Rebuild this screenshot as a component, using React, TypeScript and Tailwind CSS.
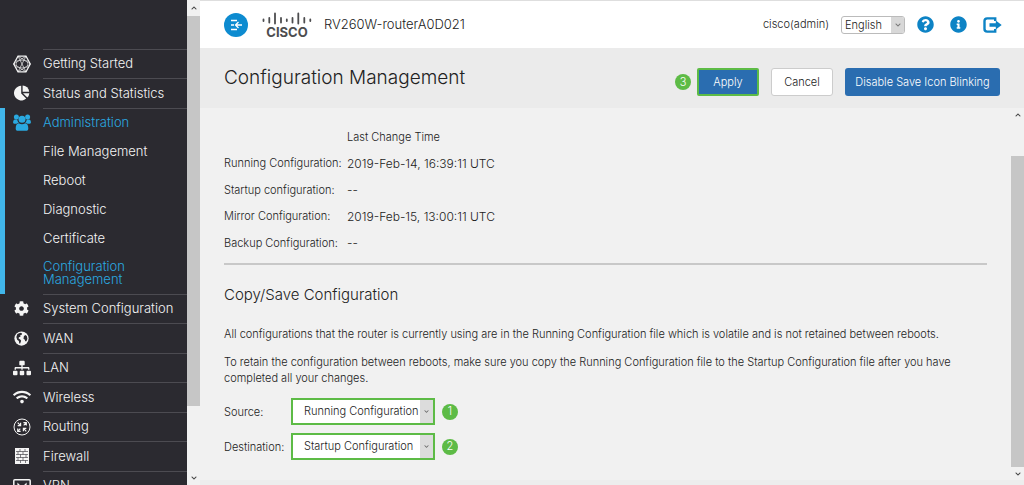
import { useState } from 'react';
import type { ReactNode } from 'react';
import {
  FaChevronDown,
  FaChevronUp,
  FaCog,
  FaInfoCircle,
  FaQuestionCircle,
  FaSitemap,
  FaWifi,
} from 'react-icons/fa';

function StartIcon() {
  return (
    <svg viewBox="0 0 18 18" className="size-[18px]" fill="none" stroke="currentColor">
      <path d="M5 1.2h8L17.3 9 13 16.8H5L.7 9z" strokeWidth="1.2" />
      <path d="M5 1.2 13 16.8M13 1.2 5 16.8M.7 9 13 1.2M17.3 9 5 16.8M.7 9 13 16.8M17.3 9 5 1.2" strokeWidth=".7" />
      <path d="M3.500 5.500h11v7h-11z" strokeWidth=".4" />
    </svg>
  );
}

function PieIcon() {
  return (
    <svg viewBox="0 0 16 16" className="size-4" fill="currentColor">
      <path d="M7.2.8a7.3 7.3 0 1 0 5 12.7L7.2 8.4z" />
      <path d="M8.6.5v6.2h6.6A6.8 6.8 0 0 0 8.6.5z" />
      <path d="M9 8.2h6.3a7 7 0 0 1-2 4.4z" />
    </svg>
  );
}

function UsersIcon() {
  return (
    <svg viewBox="0 0 18 17" className="h-[17px] w-[18px]" fill="currentColor">
      <circle cx="3.4" cy="2.9" r="2.5" />
      <circle cx="14.6" cy="2.9" r="2.5" />
      <circle cx="9" cy="5.2" r="3.5" />
      <path d="M1.6 5.5h2.6c.2 1.6.9 2.6 2 3.2-1.2 0-2 .4-2.6 1.1H1.2C.5 9.8.1 9.3.1 8.6.1 7 .6 5.9 1.600 5.500z" />
      <path d="M16.400 5.500h-2.600c-.2 1.600-.9 2.600-2 3.200 1.200 0 2 .4 2.600 1.100h2.400c.7 0 1.100-.5 1.100-1.200 0-1.600-.5-2.700-1.500-3.100z" />
      <path d="M5.800 9.200c2 1.300 4.400 1.300 6.400 0 2.200.2 3.100 2.400 3.100 5.200 0 1.500-.8 2.300-2.200 2.300H4.900c-1.400 0-2.200-.8-2.200-2.300 0-2.800.9-5 3.100-5.200z" />
    </svg>
  );
}

function GlobeIcon() {
  return (
    <svg viewBox="0 0 16 16" className="size-[15px]">
      <circle cx="8" cy="8" r="7.600" fill="currentColor" />
      <path
        d="M3.600 3.200 6.800 1.800 8.700 2.600 8 4.200 6.600 4.600 6.900 6.200 5.200 6.600 4.900 8 6.700 9 7.600 10.400 6.600 13.400 5.600 13.200 5.200 10.600 3.400 9.200 2.500 6.400z"
        fill="#2b2a30"
      />
      <path d="M10.600 5.200 12.400 4.200 13.800 5.600 14.300 8.600 13.200 10.800 11.900 11 11.600 9.200 10.100 8.200z" fill="#2b2a30" />
    </svg>
  );
}

function RoutingIcon() {
  return (
    <svg viewBox="0 0 18 18" className="size-[18px]" fill="none" stroke="currentColor">
      <circle cx="9" cy="9" r="8" strokeWidth="1" />
      <path d="m4.700 4.700 2.600 2.600M7.600 4.700v2.900H4.700M13.300 4.700l-2.600 2.600M10.400 4.700h2.900v2.900M4.700 13.300l2.600-2.600M4.700 10.400v2.900h2.900M13.300 13.300l-2.600-2.600M10.400 13.300v-2.900h2.900" strokeWidth="1.200" />
    </svg>
  );
}

function WallIcon() {
  return (
    <svg viewBox="0 0 14 16" className="h-4 w-3.5">
      <path fill="currentColor" d="M0 0h14v16H0z" />
      <path
        d="M1 3.500h12M1 6.500h12M1 9.500h12M1 12.500h12M5 1v2.500M10 1v2.500M3 3.500v3M8 3.500v3M5.500 6.500v3M11 6.500v3M3 9.500v3M8 9.500v3M5.500 12.500V15M10.500 12.500V15"
        stroke="#2b2a30"
        strokeWidth=".6"
      />
    </svg>
  );
}

function VpnIcon() {
  return (
    <svg viewBox="0 0 18 18" className="size-[18px]" fill="none" stroke="currentColor">
      <rect x=".8" y="2.800" width="16.400" height="13" rx="1" strokeWidth="1.500" />
      <path d="M5 10V7l2 2M13 10V7l-2 2" strokeWidth="1.200" />
    </svg>
  );
}

function LogoutIcon() {
  return (
    <svg viewBox="0 0 19 16" className="h-4 w-[19px]" fill="none">
      <path d="M9 1.400H4.200C2.600 1.400 1.500 2.400 1.500 4v8c0 1.600 1.100 2.600 2.700 2.600H9" stroke="currentColor" strokeWidth="2.400" />
      <path d="M9 1.400h3.200V4M9 14.600h3.200V12" stroke="currentColor" strokeWidth="2.400" />
      <path d="M6.500 6.300h6.300V3.400L18.700 8l-5.900 4.600V9.700H6.500z" fill="currentColor" />
    </svg>
  );
}

function CiscoLogo() {
  return (
    <div className="flex w-[50px] flex-col items-center pt-0.5 text-[#4d4d4f]">
      <svg viewBox="0 0 50 13" className="h-[13px] w-[50px]" stroke="currentColor" strokeWidth="1.800" strokeLinecap="round">
        <path d="M1.500 7.500V9M7.300 6v4.500M13 1.500v10M19 6v4.500M24.800 7.500V9M30.500 6v4.500M36.300 1.500v10M42.300 6v4.500M48.300 7.500V9" />
      </svg>
      <span className="text-[13px] leading-[14px] font-bold">CISCO</span>
    </div>
  );
}

type Item = { label: string; icon: ReactNode };

const topItems: Item[] = [
  { label: 'Getting Started', icon: <StartIcon /> },
  { label: 'Status and Statistics', icon: <PieIcon /> },
];

const subItems = ['File Management', 'Reboot', 'Diagnostic', 'Certificate'];

const lowerItems: Item[] = [
  { label: 'System Configuration', icon: <FaCog className="size-[15px]" /> },
  { label: 'WAN', icon: <GlobeIcon /> },
  { label: 'LAN', icon: <FaSitemap className="h-4 w-[18px]" /> },
  { label: 'Wireless', icon: <FaWifi className="h-4 w-[18px]" /> },
  { label: 'Routing', icon: <RoutingIcon /> },
  { label: 'Firewall', icon: <WallIcon /> },
  { label: 'VPN', icon: <VpnIcon /> },
];

function NavRow({ label, icon, active = false }: Item & { active?: boolean }) {
  return (
    <li className={`flex odd:h-[29px] even:h-[30px] ${active ? 'bg-[linear-gradient(to_right,#41b6ea_5px,transparent_5px)] text-[#2aa9e0]' : 'text-[#f4f4f4]'}`}>
      <span className="flex w-[43px] shrink-0 items-center justify-center">{icon}</span>
      <a href="#" className="flex flex-1 items-center border-t border-[#4c4b51] whitespace-nowrap">
        {label}
      </a>
    </li>
  );
}

function Badge({ children }: { children: ReactNode }) {
  return (
    <span className="flex size-4 shrink-0 items-center justify-center rounded-full bg-[#5dbb46] text-[11px] text-white">
      {children}
    </span>
  );
}

const changes = [
  ['Running Configuration:', '2019-Feb-14, 16:39:11 UTC'],
  ['Startup configuration:', '--'],
  ['Mirror Configuration:', '2019-Feb-15, 13:00:11 UTC'],
  ['Backup Configuration:', '--'],
];

function FileSelect({ id, label, initial, step }: { id: string; label: string; initial: string; step: number }) {
  const [value, setValue] = useState(initial);
  return (
    <div className="flex h-[27px] items-center">
      <label htmlFor={id} className="w-[67px] shrink-0 pt-0.5">
        {label}
      </label>
      <span className="relative flex h-full w-36 border-2 border-[#5dbb46] bg-white">
        <select
          id={id}
          value={value}
          onChange={(e) => setValue(e.target.value)}
          className="w-full appearance-none pl-[11px] text-[11px] text-[#222]"
        >
          <option>Running Configuration</option>
          <option>Startup Configuration</option>
        </select>
        <span className="pointer-events-none absolute inset-y-0 right-0 flex w-[13px] items-center justify-center bg-[#dcdcdc] text-[#666]">
          <FaChevronDown className="size-[5px]" />
        </span>
      </span>
      <span className="ml-[7px]">
        <Badge>{step}</Badge>
      </span>
    </div>
  );
}

export default function App() {
  const [language, setLanguage] = useState('English');
  return (
    <div className="flex h-screen overflow-hidden bg-[#ededed] font-['Inter','Liberation_Sans',sans-serif] text-[11px] font-[350] text-[#222]">
      <nav className="w-[187px] shrink-0 overflow-hidden bg-[#2b2a30] pt-[49px] text-[13px]">
        <ul>
          {topItems.map((item) => (
            <NavRow key={item.label} {...item} />
          ))}
          <NavRow label="Administration" icon={<UsersIcon />} active />
          <li className="bg-[linear-gradient(to_right,#41b6ea_5px,transparent_5px)] pl-[43px] text-[#f4f4f4]">
            <ul>
              {subItems.map((item) => (
                <li key={item} className="flex h-[29px] items-center">
                  <a href="#">{item}</a>
                </li>
              ))}
              <li className="w-28 pt-[7px] pb-2 leading-[13px] text-[#2aa9e0]">
                <a href="#">Configuration Management</a>
              </li>
            </ul>
          </li>
          {lowerItems.map((item) => (
            <NavRow key={item.label} {...item} />
          ))}
        </ul>
      </nav>
      <div className="flex w-[13px] shrink-0 flex-col bg-[#f1f1f1] text-[#444]">
        <span className="flex h-4 items-center justify-center">
          <FaChevronUp className="size-[6px]" />
        </span>
        <span className="grow-[390] bg-[#c6c6c6]" />
        <span className="grow-[65]" />
        <span className="flex h-3.5 items-center justify-center">
          <FaChevronDown className="size-[6px]" />
        </span>
      </div>

      <div className="flex min-w-0 flex-1 flex-col">
        <header className="flex h-12 shrink-0 items-center border-t border-[#dedede] bg-white pr-[22px] pl-6">
          <button aria-label="Collapse menu" className="flex size-6 items-center justify-center rounded-full bg-[#0d8bd0] text-white">
            <svg viewBox="0 0 12 12" className="size-3" fill="none" stroke="currentColor" strokeWidth="1.300">
              <path d="M1 1.500h6M1 6h3M1 10.500h6M5.500 6H12M8.500 3 5.500 6l3 3" />
            </svg>
          </button>
          <span className="ml-[14px]">
            <CiscoLogo />
          </span>
          <span className="ml-3 text-[13px]">RV260W-routerA0D021</span>
          <div className="ml-auto flex items-center">
            <span>cisco(admin)</span>
            <span className="relative ml-3 flex h-[18px] w-16 overflow-hidden rounded-[3px] border border-[#bbb] bg-white">
              <select
                aria-label="Language"
                value={language}
                onChange={(e) => setLanguage(e.target.value)}
                className="w-full appearance-none pl-[3px] text-[11px] leading-4"
              >
                <option>English</option>
              </select>
              <span className="pointer-events-none absolute inset-y-0 right-0 flex w-[13px] items-center justify-center bg-[#d8d8d8] text-[#777]">
                <FaChevronDown className="size-[6px]" />
              </span>
            </span>
            <div className="ml-3 flex items-center gap-4 text-[#0d83c5]">
              <button aria-label="Help">
                <FaQuestionCircle className="size-[17px]" />
              </button>
              <button aria-label="About">
                <FaInfoCircle className="size-[17px]" />
              </button>
              <button aria-label="Log out">
                <LogoutIcon />
              </button>
            </div>
          </div>
        </header>

        <div className="flex h-[60px] shrink-0 items-center bg-[#ebebeb] pr-6 pl-6">
          <h1 className="text-[19px]">Configuration Management</h1>
          <div className="ml-auto flex items-center pt-2">
            <Badge>3</Badge>
            <button className="ml-[6px] h-7 w-[62px] rounded-[2px] border-2 border-[#5dbb46] bg-[#2a6db0] text-white">Apply</button>
            <button className="ml-3 h-7 w-[62px] rounded-[3px] border border-[#ccc] bg-white">Cancel</button>
            <button className="ml-3 h-7 w-[155px] rounded-[3px] bg-[#2a6db0] whitespace-nowrap text-white">Disable Save Icon Blinking</button>
          </div>
        </div>

        <div className="mb-[5px] flex min-h-0 flex-1 bg-[#f1f1f1]">
          <main className="min-w-0 flex-1 overflow-hidden pt-4 pr-6 pl-6">
            <table className="text-left">
              <thead>
                <tr className="h-[26px]">
                  <td className="w-[123px]" />
                  <th className="p-0 font-[350]">Last Change Time</th>
                </tr>
              </thead>
              <tbody>
                {changes.map(([name, time]) => (
                  <tr key={name} className="odd:h-[27px] even:h-[26px]">
                    <th className="p-0 font-[350] whitespace-nowrap">{name}</th>
                    <td className="p-0 text-[12px]">{time}</td>
                  </tr>
                ))}
              </tbody>
            </table>
            <hr className="mt-[7px] border-t-2 border-[#c8c8c8]" />
            <h2 className="mt-5 text-[15px] leading-5">Copy/Save Configuration</h2>
            <p className="mt-[21px] leading-4">
              All configurations that the router is currently using are in the Running Configuration file which is volatile and is not
              retained between reboots.
            </p>
            <p className="mt-3 leading-4">
              To retain the configuration between reboots, make sure you copy the Running Configuration file to the Startup Configuration
              file after you have completed all your changes.
            </p>
            <form className="mt-3 flex flex-col gap-2">
              <FileSelect id="source" label="Source:" initial="Running Configuration" step={1} />
              <FileSelect id="destination" label="Destination:" initial="Startup Configuration" step={2} />
            </form>
          </main>
          <div className="flex w-[13px] shrink-0 flex-col text-[#444]">
            <span className="flex h-3.5 items-center justify-center">
              <FaChevronUp className="size-[6px]" />
            </span>
            <span className="grow-[34]" />
            <span className="grow-[311] bg-[#c6c6c6]" />
            <span className="flex h-[13px] items-center justify-center">
              <FaChevronDown className="size-[6px]" />
            </span>
          </div>
        </div>
      </div>
    </div>
  );
}
